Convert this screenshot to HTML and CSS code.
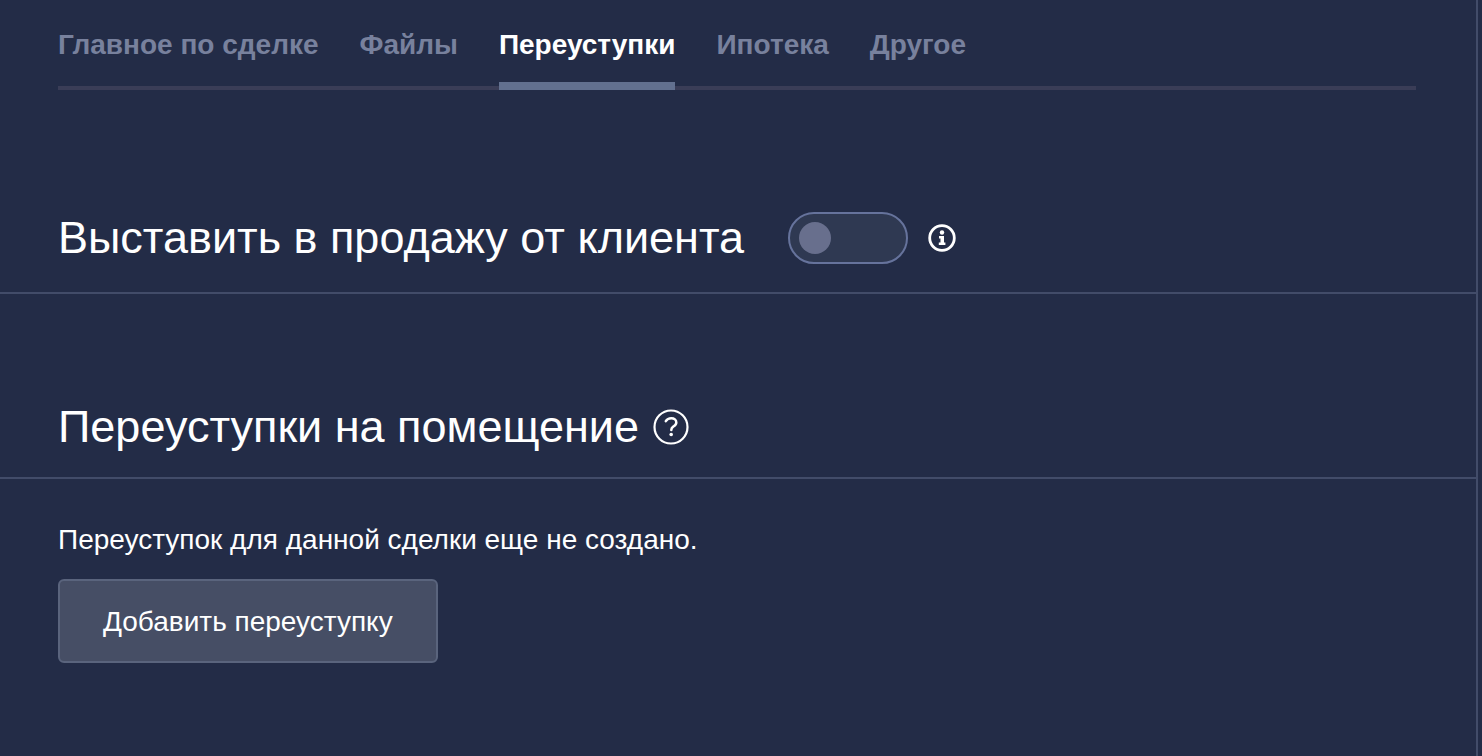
FILE: index.html
```
<!DOCTYPE html>
<html lang="ru">
<head>
  <meta charset="UTF-8">
  <meta name="viewport" content="width=device-width, initial-scale=1.0">
  <title>Переуступки</title>
  <link rel="stylesheet" href="styles.css">
</head>
<body>
  <main class="panel">
    <nav class="tabs">
      <a class="tab" href="#main">Главное по сделке</a>
      <a class="tab" href="#files">Файлы</a>
      <a class="tab active" href="#cessions">Переуступки</a>
      <a class="tab" href="#mortgage">Ипотека</a>
      <a class="tab" href="#other">Другое</a>
    </nav>

    <section class="sale">
      <div class="section-header">
        <h2><label for="sale-toggle">Выставить в продажу от клиента</label></h2>
        <input class="toggle" type="checkbox" id="sale-toggle">
        <svg class="info-icon" viewBox="0 0 28 28" width="28" height="28">
          <circle cx="14" cy="14" r="12.3" fill="none" stroke="#fff" stroke-width="2.8"/>
          <circle cx="14" cy="8.5" r="2.2" fill="#fff"/>
          <path d="M11 12h5v6.500h1.400V21H10.800v-2.500h1.700v-4H11z" fill="#fff"/>
        </svg>
      </div>
    </section>

    <section class="cessions">
      <div class="section-header">
        <h2>Переуступки на помещение</h2>
        <svg class="help-icon" viewBox="0 0 36 36" width="36" height="36">
          <circle cx="18" cy="18" r="16.5" fill="none" stroke="#fff" stroke-width="2.2"/>
          <path d="M12.800 12.200C14 10.200 15.800 9.300 18.300 9.300C21.300 9.300 23.300 11 23.300 13.400C23.300 15.800 21.800 16.600 20.200 17.600C18.800 18.500 18.300 19.300 18.300 21" fill="none" stroke="#fff" stroke-width="2.5" stroke-linecap="round"/>
          <circle cx="18.2" cy="25.500" r="1.8" fill="#fff"/>
        </svg>
      </div>
      <div class="section-body">
        <p>Переуступок для данной сделки еще не создано.</p>
        <button class="add-button" type="button">Добавить переуступку</button>
      </div>
    </section>
  </main>
</body>
</html>
```

FILE: styles.css
```
* {
  box-sizing: border-box;
}
body {
  margin: 0;
  background-color: #232c47;
  color: #fff;
  font-family: "Helvetica Neue", "Liberation Sans", Arial, sans-serif;
  font-size: 28px;
  line-height: 32px;
}
.panel {
  min-height: 100vh;
  margin-right: 4px;
  padding-top: 29px;
  border-right: 2px solid #424c69;
}
.tabs {
  display: flex;
  gap: 41px;
  margin: 0 60px 0 58px;
  box-shadow: inset 0 -4px #3a3d57;
}
.tab {
  padding-bottom: 21px;
  border-bottom: 8px solid transparent;
  color: #78819d;
  font-weight: bold;
  text-decoration: none;
}
.tab.active {
  color: #fff;
  border-bottom-color: #62708f;
}
.section-header {
  display: flex;
  align-items: center;
  padding: 0 58px 28px;
  border-bottom: 2px solid #424c69;
}
.section-header h2 {
  margin: 0;
  font-size: 45px;
  font-weight: normal;
  line-height: 52px;
}
.sale {
  padding-top: 122px;
}
.toggle {
  appearance: none;
  display: flex;
  align-items: center;
  width: 120px;
  height: 52px;
  margin: 0 20px 0 44px;
  padding: 0 9px;
  background-color: #2f3952;
  border: 2px solid #66739c;
  border-radius: 26px;
  cursor: pointer;
}
.toggle::before {
  content: "";
  width: 32px;
  height: 32px;
  background-color: #686f8d;
  border-radius: 50%;
}
.toggle:checked {
  justify-content: flex-end;
}
.cessions {
  padding-top: 107px;
}
.cessions .section-header {
  padding-bottom: 24px;
}
.help-icon {
  margin-left: 14px;
}
.section-body {
  padding: 45px 58px;
}
.section-body p {
  margin: 0 0 23px;
}
.add-button {
  padding: 25px 43px 23px;
  background-color: #464e65;
  border: 2px solid #5a647d;
  border-radius: 6px;
  color: #fff;
  font: inherit;
  cursor: pointer;
}
```
